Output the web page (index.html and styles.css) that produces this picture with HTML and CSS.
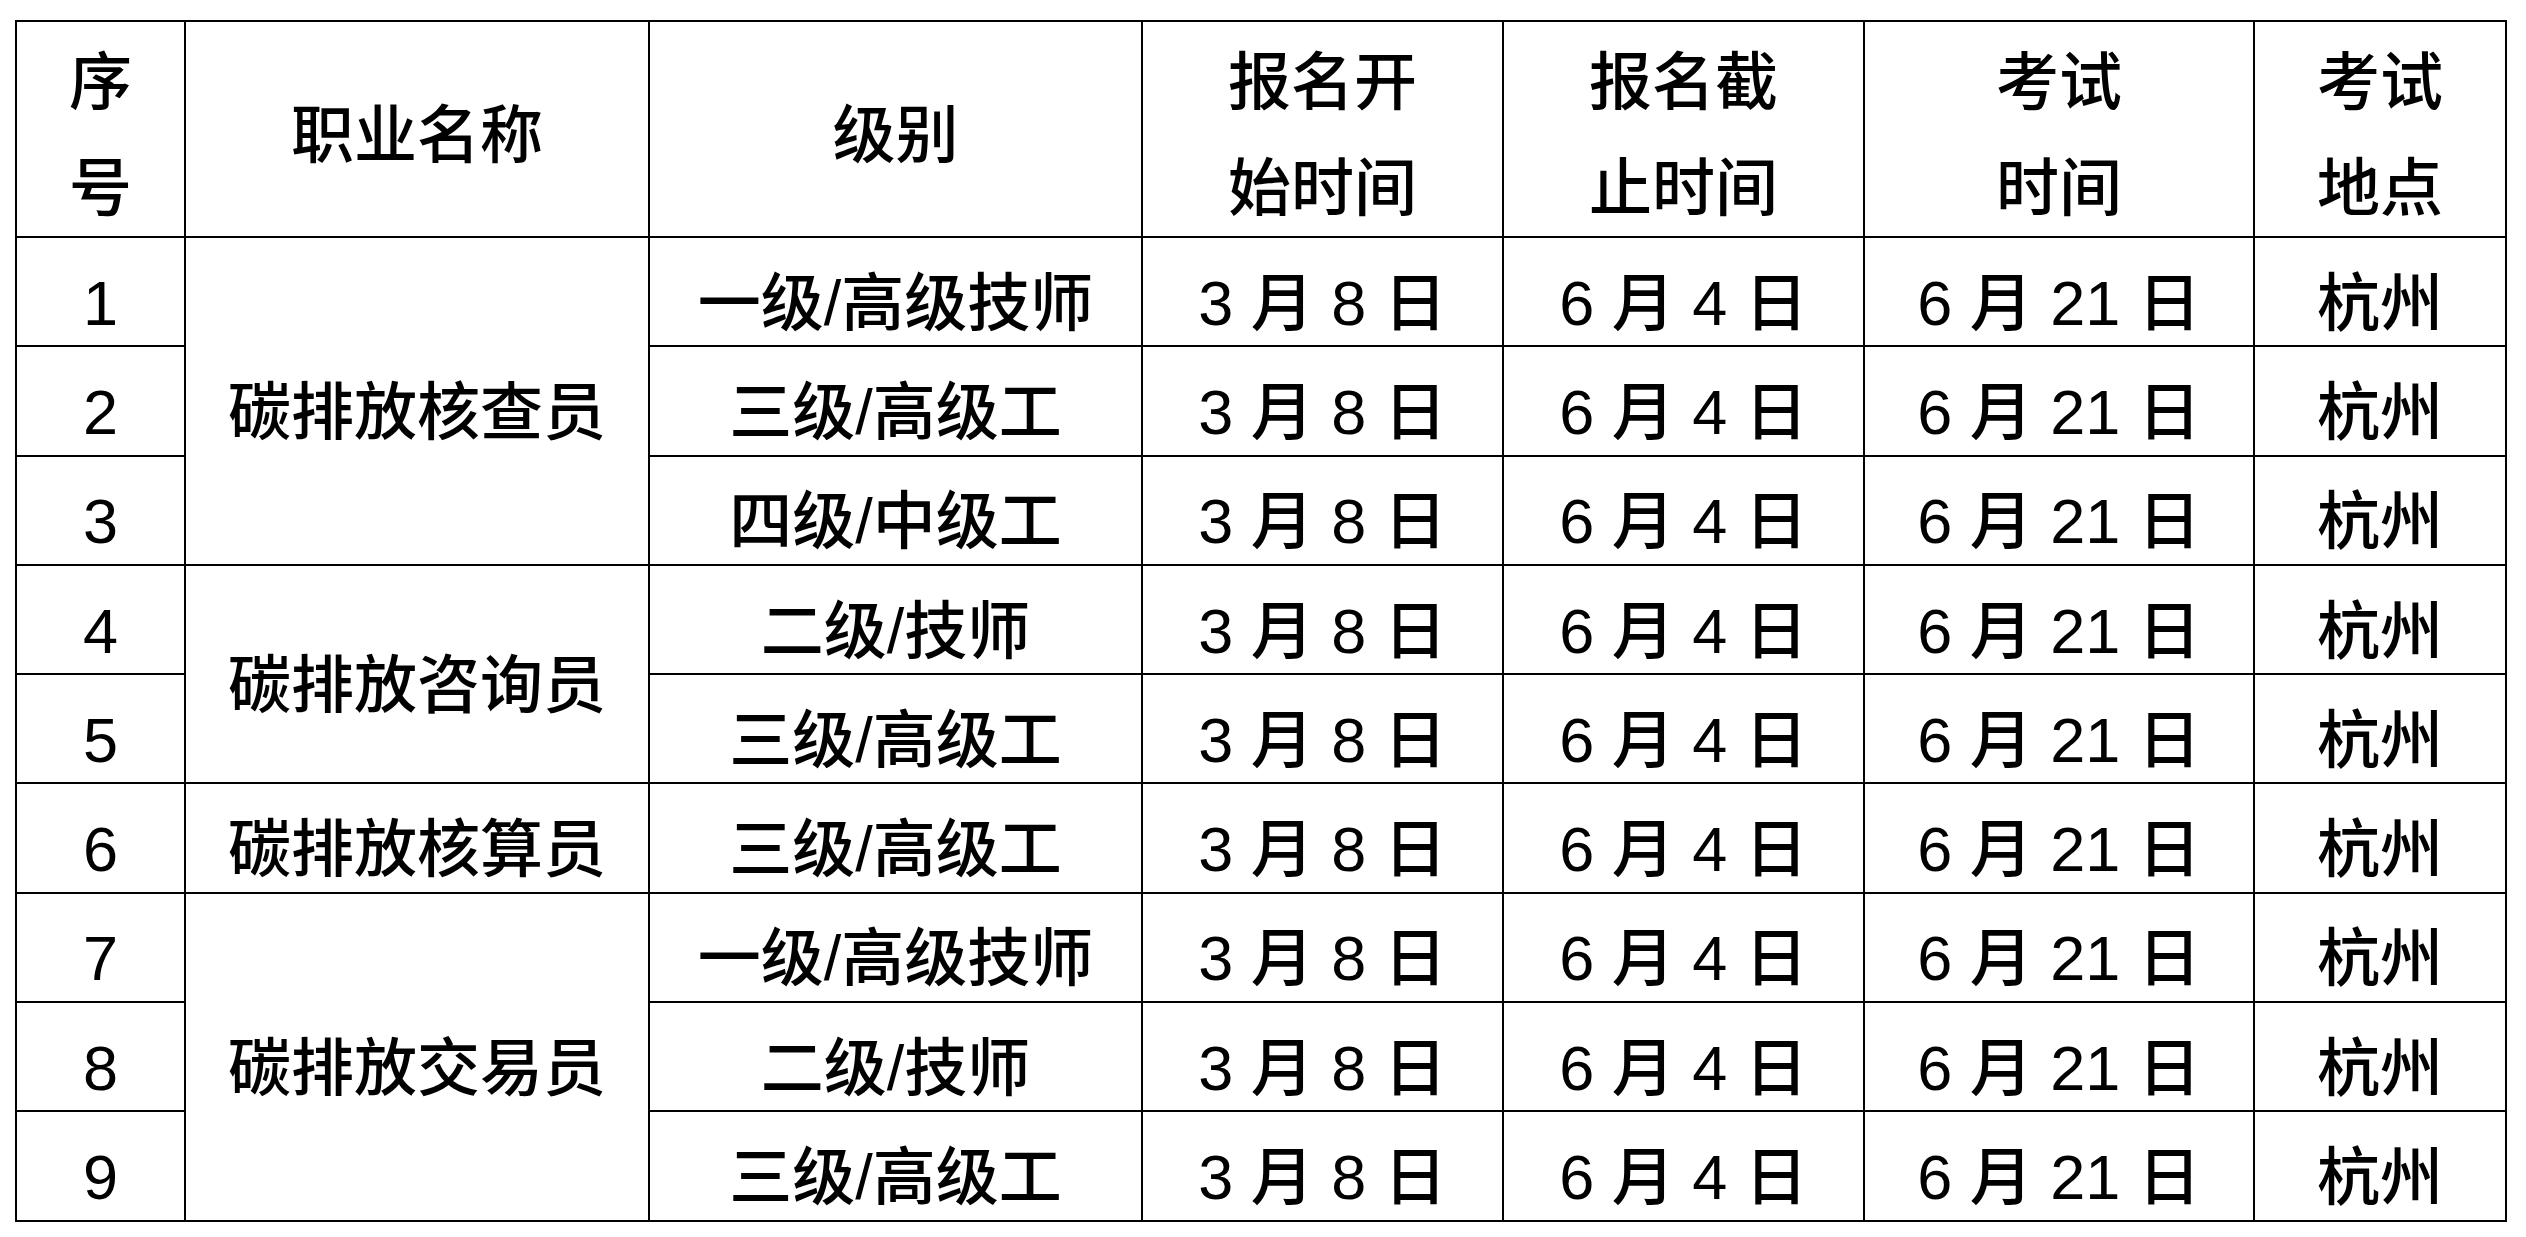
FILE: index.html
```html
<!DOCTYPE html>
<html lang="zh-CN">
<head>
<meta charset="utf-8">
<title>考试安排</title>
<link rel="stylesheet" href="styles.css">
</head>
<body>
<div class="page">
<table class="exam">
  <colgroup>
    <col class="c-no"><col class="c-name"><col class="c-level"><col class="c-start"><col class="c-end"><col class="c-date"><col class="c-place">
  </colgroup>
  <thead>
    <tr class="head">
      <th>序<br>号</th>
      <th>职业名称</th>
      <th>级别</th>
      <th>报名开<br>始时间</th>
      <th>报名截<br>止时间</th>
      <th>考试<br>时间</th>
      <th>考试<br>地点</th>
    </tr>
  </thead>
  <tbody>
    <tr><td>1</td><td rowspan="3">碳排放核查员</td><td>一级/高级技师</td><td>3 月 8 日</td><td>6 月 4 日</td><td>6 月 21 日</td><td>杭州</td></tr>
    <tr><td>2</td><td>三级/高级工</td><td>3 月 8 日</td><td>6 月 4 日</td><td>6 月 21 日</td><td>杭州</td></tr>
    <tr><td>3</td><td>四级/中级工</td><td>3 月 8 日</td><td>6 月 4 日</td><td>6 月 21 日</td><td>杭州</td></tr>
    <tr><td>4</td><td rowspan="2">碳排放咨询员</td><td>二级/技师</td><td>3 月 8 日</td><td>6 月 4 日</td><td>6 月 21 日</td><td>杭州</td></tr>
    <tr><td>5</td><td>三级/高级工</td><td>3 月 8 日</td><td>6 月 4 日</td><td>6 月 21 日</td><td>杭州</td></tr>
    <tr><td>6</td><td>碳排放核算员</td><td>三级/高级工</td><td>3 月 8 日</td><td>6 月 4 日</td><td>6 月 21 日</td><td>杭州</td></tr>
    <tr><td>7</td><td rowspan="3">碳排放交易员</td><td>一级/高级技师</td><td>3 月 8 日</td><td>6 月 4 日</td><td>6 月 21 日</td><td>杭州</td></tr>
    <tr><td>8</td><td>二级/技师</td><td>3 月 8 日</td><td>6 月 4 日</td><td>6 月 21 日</td><td>杭州</td></tr>
    <tr><td>9</td><td>三级/高级工</td><td>3 月 8 日</td><td>6 月 4 日</td><td>6 月 21 日</td><td>杭州</td></tr>
  </tbody>
</table>
</div>
</body>
</html>
```
FILE: styles.css
```css
html, body {
  margin: 0;
  padding: 0;
  background: #ffffff;
}
.page {
  padding: 20px 0 0 15px;
}
.exam {
  border-collapse: collapse;
  table-layout: fixed;
  width: 2492px;
  font-family: "Liberation Sans", "Noto Sans CJK SC", sans-serif;
  font-size: 63px;
  font-weight: 500;
  color: #000000;
}
.c-no { width: 169px; }
.c-name { width: 464px; }
.c-level { width: 493px; }
.c-start { width: 361px; }
.c-end { width: 361px; }
.c-date { width: 390px; }
.c-place { width: 252px; }
.exam th,
.exam td {
  border: 2px solid #000000;
  text-align: center;
  vertical-align: middle;
  font-weight: 500;
  white-space: nowrap;
}
.head th {
  height: 212px;
  line-height: 106px;
  padding: 2px 0 0 0;
  font-family: "Noto Sans CJK SC", "Liberation Sans", sans-serif;
}
.exam tbody tr {
  height: 109.3px;
}
.exam td {
  line-height: 70px;
  padding: 22px 0 0 0;
}
```
